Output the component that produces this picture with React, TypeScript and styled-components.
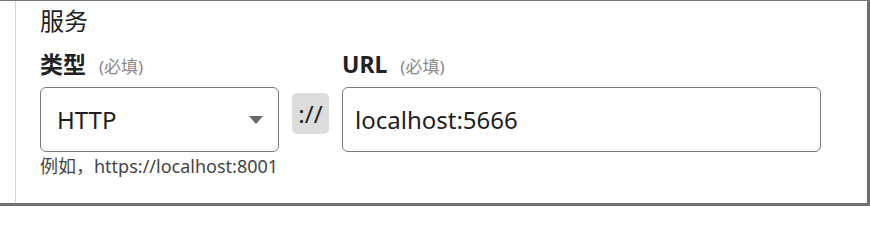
import React from 'react';
import styled, { createGlobalStyle } from 'styled-components';

const GlobalStyle = createGlobalStyle`
  html, body {
    margin: 0;
    padding: 0;
    background: #ffffff;
  }
  body {
    font-family: "Noto Sans", "Noto Sans CJK SC", sans-serif;
    color: #222;
  }
`;

const Frame = styled.div`
  width: 870px;
  height: 206px;
  box-sizing: border-box;
  border-top: 1px solid #777;
  border-right: 3px solid #6f6f6f;
  border-bottom: 3px solid #6f6f6f;
  overflow: hidden;
`;

const Panel = styled.div`
  margin-left: 15px;
  height: 100%;
  border-left: 1px solid #d4d4d4;
  padding: 3px 0 0 24px;
  box-sizing: border-box;
`;

const Title = styled.div`
  font-size: 24px;
  line-height: 34px;
  color: #222;
`;

const Fields = styled.div`
  display: flex;
  align-items: flex-start;
  gap: 13px;
  margin-top: 9px;
`;

const Field = styled.div<{ $width: number }>`
  width: ${(p) => p.$width}px;
  display: flex;
  flex-direction: column;
`;

const Label = styled.div`
  display: flex;
  align-items: baseline;
  gap: 13px;
  height: 40px;
  font-size: 23px;
  line-height: 34px;
  font-weight: 700;
  color: #222;
`;

const Required = styled.span`
  font-size: 17px;
  font-weight: 400;
  color: #888;
`;

const Control = styled.div<{ $padLeft: number }>`
  height: 65px;
  box-sizing: border-box;
  border: 1px solid #7a7a7a;
  border-radius: 6px;
  display: flex;
  align-items: center;
  justify-content: space-between;
  padding: 0 15px 0 ${(p) => p.$padLeft}px;
  font-size: 24px;
  color: #1e1e1e;
  background: #fff;
`;

const Caret = styled.span`
  width: 0;
  height: 0;
  border-left: 7px solid transparent;
  border-right: 7px solid transparent;
  border-top: 8px solid #666;
`;

const Help = styled.div`
  margin-top: 2px;
  font-size: 18px;
  line-height: 24px;
  color: #444;
`;

const Separator = styled.div`
  width: 37px;
  height: 41px;
  margin-top: 46px;
  border-radius: 5px;
  background: #dcdcdc;
  display: flex;
  align-items: center;
  justify-content: center;
  font-size: 24px;
  color: #222;
`;

export default function App() {
  return (
    <>
      <GlobalStyle />
      <Frame>
        <Panel>
          <Title>服务</Title>
          <Fields>
            <Field $width={239}>
              <Label>
                类型<Required>(必填)</Required>
              </Label>
              <Control $padLeft={16}>
                HTTP
                <Caret />
              </Control>
              <Help>例如，https://localhost:8001</Help>
            </Field>
            <Separator>://</Separator>
            <Field $width={479}>
              <Label>
                URL<Required>(必填)</Required>
              </Label>
              <Control $padLeft={12}>localhost:5666</Control>
            </Field>
          </Fields>
        </Panel>
      </Frame>
    </>
  );
}
